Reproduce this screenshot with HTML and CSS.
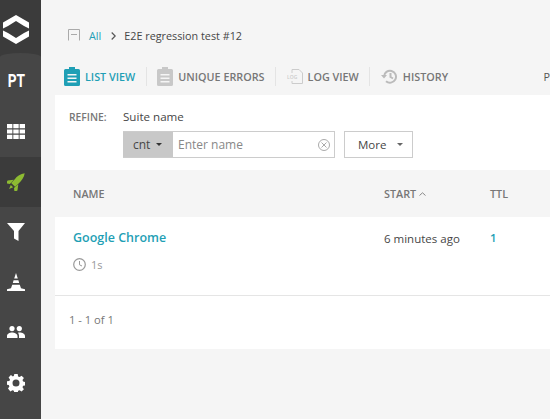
FILE: index.html
```html
<!DOCTYPE html>
<html lang="en">
<head>
    <meta charset="UTF-8">
    <title>E2E regression test #12</title>
    <link rel="stylesheet" href="styles.css">
</head>
<body>
    <nav class="sidebar">
        <div class="logo">
            <svg width="26" height="29" viewBox="0 0 26 29"><path fill="#fff" d="M13 0 26 7.500V13.500L21 11 13 6 5 11 0 13.500V7.500ZM13 29 0 21.500V15.500L5 18 13 23 21 18 26 15.500V21.500Z"/></svg>
        </div>
        <div class="nav-project">
            <div class="project-code"><span>PT</span></div>
            <div class="nav-item nav-grid">
                <svg width="18" height="15" viewBox="0 0 18 15"><path fill="#fff" d="M0 0h5.400v4.200H0zM6.300 0h5.400v4.200H6.300zM12.600 0H18v4.200h-5.400zM0 5.400h5.400v4.200H0zM6.300 5.400h5.400v4.200H6.300zM12.600 5.400H18v4.200h-5.400zM0 10.800h5.400V15H0zM6.300 10.800h5.400V15H6.300zM12.600 10.800H18V15h-5.400z"/></svg>
            </div>
        </div>
        <div class="nav-item nav-active">
            <svg width="18" height="18" viewBox="-11 -11 22 22"><g transform="rotate(45)"><path fill="#8dbb32" d="M0-15C3-11 4-6 3.500-1L3.300 5H-3.300L-3.500-1C-4-6-3-11 0-15ZM-4 0-8.500 6-7.500 10-3.500 7ZM4 0 8.500 6 7.500 10 3.500 7ZM-2 7H2L0 12Z"/></g></svg>
        </div>
        <div class="nav-item nav-filter">
            <svg width="18" height="18" viewBox="0 0 18 18"><path fill="#fff" d="M0 0h18l-6.500 8v10L7 15.500V8Z"/></svg>
        </div>
        <div class="nav-item nav-cone">
            <svg width="18" height="18" viewBox="0 0 18 18"><path fill="#fff" d="M9 0 10.800 5.500H7.200ZM6.600 7.300h4.800l.8 2.700H5.800ZM5.200 11.800h7.600l1.200 3.500 4 1v1.700H0v-1.700l4-1Z"/></svg>
        </div>
        <div class="nav-item nav-users">
            <svg width="18" height="12" viewBox="0 0 18 12"><circle cx="5" cy="2.600" r="2.600" fill="#fff"/><circle cx="12.300" cy="2.600" r="2.600" fill="#fff"/><path fill="#fff" d="M0 12V10C0 8 2.500 6.500 5 6.500S10.500 8 10.500 10v2ZM11 6.700c3.500-.7 7 1 7 3.300v2h-6V10c0-1.500-.3-2.300-1-3.300Z"/></svg>
        </div>
        <div class="nav-item nav-gear">
            <svg width="18" height="18" viewBox="0 0 18 18"><path fill="#fff" fill-rule="evenodd" d="M7.300 0h3.400l.4 2.400 1.500.7 2-1.400 2.300 2.400-1.400 2 .6 1.500 2.400.4v3.400l-2.400.4-.6 1.500 1.400 2-2.300 2.300-2-1.400-1.500.6-.4 2.400H7.300l-.4-2.400-1.500-.6-2 1.400L1 14.400l1.400-2-.6-1.500L0 10.700V7.300l2.400-.4.600-1.500-1.400-2L3.900 1l2 1.400 1-.6ZM9 5.500a3.500 3.500 0 1 0 0 7 3.500 3.500 0 0 0 0-7Z"/></svg>
        </div>
    </nav>

    <main class="content">
        <div class="breadcrumbs">
            <svg class="crumb-icon" width="12" height="12" viewBox="0 0 12 12"><path fill="none" stroke="#aaa" d="M.500 11.500V.500h11v11M3 5.500h6"/></svg>
            <a class="link crumb-all">All</a>
            <svg class="crumb-sep" width="5" height="8" viewBox="0 0 5 8"><path fill="none" stroke="#555" stroke-width="1.200" d="M.700.500 4.200 4 .700 7.500"/></svg>
            <span>E2E regression test #12</span>
        </div>

        <div class="tabs">
            <div class="tab tab-active">
                <svg width="16" height="19" viewBox="0 0 16 19"><path fill="#1f9fb5" fill-rule="evenodd" d="M1.500 2H5V0h6v2h3.500A1.500 1.500 0 0 1 16 3.500v14a1.500 1.500 0 0 1-1.500 1.500h-13A1.500 1.500 0 0 1 0 17.500v-14A1.500 1.500 0 0 1 1.500 2ZM3.500 7v1.500h9V7Zm0 3.500V12h9v-1.500Zm0 3.500v1.500h9V14Z"/></svg>
                LIST VIEW
            </div>
            <div class="tab">
                <svg width="16" height="19" viewBox="0 0 16 19"><path fill="#c8c8c8" fill-rule="evenodd" d="M1.500 2H5V0h6v2h3.500A1.500 1.500 0 0 1 16 3.500v14a1.500 1.500 0 0 1-1.500 1.500h-13A1.500 1.500 0 0 1 0 17.500v-14A1.500 1.500 0 0 1 1.500 2ZM3.500 7v1.500h9V7Zm0 3.500V12h9v-1.500Zm0 3.500v1.500h9V14Z"/></svg>
                UNIQUE ERRORS
            </div>
            <div class="tab">
                <svg width="16" height="15" viewBox="0 0 16 15"><path fill="none" stroke="#ccc" d="M5 4V.500h7l3.500 3.500v10.500H5V12"/><text x="0" y="10" class="log-text">LOG</text></svg>
                LOG VIEW
            </div>
            <div class="tab">
                <svg width="17" height="15" viewBox="0 0 17 15"><path fill="none" stroke="#bbb" stroke-width="2" d="M3 7.500a6 6 0 1 1 2 4.700M9.500 4v4l2.500 1.500"/><path fill="#bbb" d="M0 6h6L3 9.500Z"/></svg>
                HISTORY
            </div>
            <div class="tab-extra">P</div>
        </div>

        <div class="panel">
            <div class="refine">
                <div class="refine-label">REFINE:</div>
                <div class="refine-body">
                    <div class="suite-label">Suite name</div>
                    <div class="refine-controls">
                        <div class="input-group">
                            <div class="cond-select">cnt <span class="caret caret-dark"></span></div>
                            <div class="name-input">
                                <span>Enter name</span>
                                <svg width="12" height="12" viewBox="0 0 12 12"><circle cx="6" cy="6" r="5.500" fill="none" stroke="#aaa"/><path stroke="#aaa" d="m3.500 3.500 5 5M8.500 3.500l-5 5"/></svg>
                            </div>
                        </div>
                        <div class="more-btn">More <span class="caret"></span></div>
                    </div>
                </div>
            </div>

            <div class="table-head">
                <div class="col-name">NAME</div>
                <div class="col-start">START <svg width="7" height="4" viewBox="0 0 7 4"><path fill="none" stroke="#888" d="M.500 3.500 3.500.800l3 2.700"/></svg></div>
                <div class="col-ttl">TTL</div>
            </div>

            <div class="table-row">
                <div class="col-name">
                    <a class="link launch-name">Google Chrome</a>
                    <div class="duration">
                        <svg width="13" height="13" viewBox="0 0 13 13"><circle cx="6.500" cy="6.500" r="5.800" fill="none" stroke="#999" stroke-width="1.200"/><path fill="none" stroke="#999" d="M6.500 3v3.800l2.500 1.200"/></svg>
                        1s
                    </div>
                </div>
                <div class="col-start">6 minutes ago</div>
                <div class="col-ttl"><a class="link">1</a></div>
            </div>

            <div class="table-foot">1 - 1 of 1</div>
        </div>
    </main>
</body>
</html>
```

FILE: styles.css
```css
* {
    box-sizing: border-box;
}

html, body {
    height: 100%;
    overflow: hidden;
}

body {
    margin: 0;
    display: flex;
    font-family: "Open Sans", sans-serif;
    font-size: 13px;
    color: #464646;
    background-color: #f5f5f5;
}

svg {
    display: block;
    flex: none;
}

.link {
    color: #1f9fb5;
}

/* sidebar */
.sidebar {
    width: 41px;
    flex: none;
    background-color: #464646;
}

.logo {
    height: 57px;
    padding: 2px 9px 0 0;
    display: flex;
    justify-content: center;
    align-items: center;
    background-color: #3b3b3b;
}

.nav-project {
    height: 104px;
    margin-top: -4px;
    border-radius: 50% 50% 0 0 / 4px 4px 0 0;
    background-color: #464646;
}

.project-code {
    height: 53px;
    padding: 18px 9px 0 0;
    display: flex;
    justify-content: center;
    font-family: "Roboto", sans-serif;
    font-size: 18px;
    line-height: 20px;
    font-weight: 700;
    color: #fff;
}

.project-code span {
    transform: scaleX(.76);
}

.nav-item {
    height: 50px;
    padding-right: 9px;
    display: flex;
    justify-content: center;
    align-items: center;
}

.nav-grid {
    height: 51px;
}

.nav-active {
    background-color: #3b3b3b;
}

.nav-gear {
    padding-top: 2px;
}

/* main */
.content {
    flex: 1;
    min-width: 0;
    padding-left: 14px;
}

.breadcrumbs {
    height: 54px;
    padding: 16px 0 0 13px;
    display: flex;
    align-items: center;
    gap: 8px;
    font-size: 10.800px;
    color: #464646;
}

.crumb-all {
    margin-left: 1px;
}

.crumb-sep {
    margin: 1px 0 0 2px;
}

.tabs {
    height: 41px;
    margin-left: 9px;
    padding-top: 4px;
    display: flex;
    align-items: center;
    font-size: 10.800px;
    font-weight: 600;
    color: #777;
    white-space: nowrap;
}

.tab {
    height: 19px;
    padding: 0 10.500px;
    display: flex;
    align-items: center;
    gap: 5px;
    border-right: 1px solid #e4e4e4;
}

.tab:first-child {
    padding-left: 0;
}

.tab:nth-child(4) {
    border-right: none;
}

.tab-active {
    color: #1f9fb5;
}

.log-text {
    font-size: 5px;
    fill: #ccc;
}

.tab-extra {
    margin-left: auto;
    font-weight: 400;
    color: #555;
}

.panel {
    width: 495px;
    background-color: #fff;
}

/* filter row */
.refine {
    height: 75px;
    padding: 14px 0 0 14px;
    display: flex;
}

.refine-label {
    width: 54px;
    padding-top: 1px;
    font-size: 10.300px;
    line-height: 14px;
    font-weight: 600;
    color: #777;
}

.suite-label {
    font-size: 11.600px;
    line-height: 16px;
}

.refine-controls {
    margin-top: 6px;
    display: flex;
    gap: 9px;
}

.input-group {
    width: 212px;
    height: 27px;
    display: flex;
    border: 1px solid #ccc;
    border-left: none;
}

.cond-select {
    width: 50px;
    padding-left: 10px;
    display: flex;
    align-items: center;
    gap: 6px;
    background-color: #c8c8c8;
    font-size: 12px;
}

.name-input {
    flex: 1;
    padding: 0 4px 0 5px;
    display: flex;
    justify-content: space-between;
    align-items: center;
    font-size: 12px;
    color: #888;
}

.more-btn {
    width: 69px;
    height: 27px;
    padding-left: 13px;
    display: flex;
    align-items: center;
    gap: 11px;
    border: 1px solid #ccc;
    font-size: 11.500px;
}

.caret {
    width: 0;
    height: 0;
    border-left: 3.500px solid transparent;
    border-right: 3.500px solid transparent;
    border-top: 3px solid #666;
}

.caret-dark {
    border-top-color: #333;
}

/* table */
.table-head {
    height: 47px;
    padding-top: 0;
    display: flex;
    align-items: center;
    background-color: #f5f5f5;
    font-size: 10.800px;
    font-weight: 600;
    color: #777;
}

.table-row {
    height: 79px;
    display: flex;
    border-bottom: 1px solid #e5e5e5;
}

.col-name {
    width: 329px;
    padding-left: 18px;
}

.col-start {
    width: 106px;
    display: flex;
    align-items: center;
    gap: 3px;
    height: max-content;
}

.table-row .col-start {
    padding-top: 14px;
    font-size: 11.500px;
    line-height: 16px;
}

.table-row .col-ttl {
    padding-top: 13px;
    font-size: 11.500px;
    line-height: 16px;
    font-weight: 600;
}

.launch-name {
    display: block;
    padding-top: 12px;
    font-size: 12.500px;
    line-height: 17px;
    font-weight: 600;
}

.duration {
    margin-top: 11px;
    display: flex;
    align-items: center;
    gap: 5px;
    font-size: 11px;
    color: #999;
}

.table-foot {
    height: 53px;
    padding: 16px 0 0 14px;
    font-size: 11.200px;
    line-height: 16px;
    color: #777;
}
```
